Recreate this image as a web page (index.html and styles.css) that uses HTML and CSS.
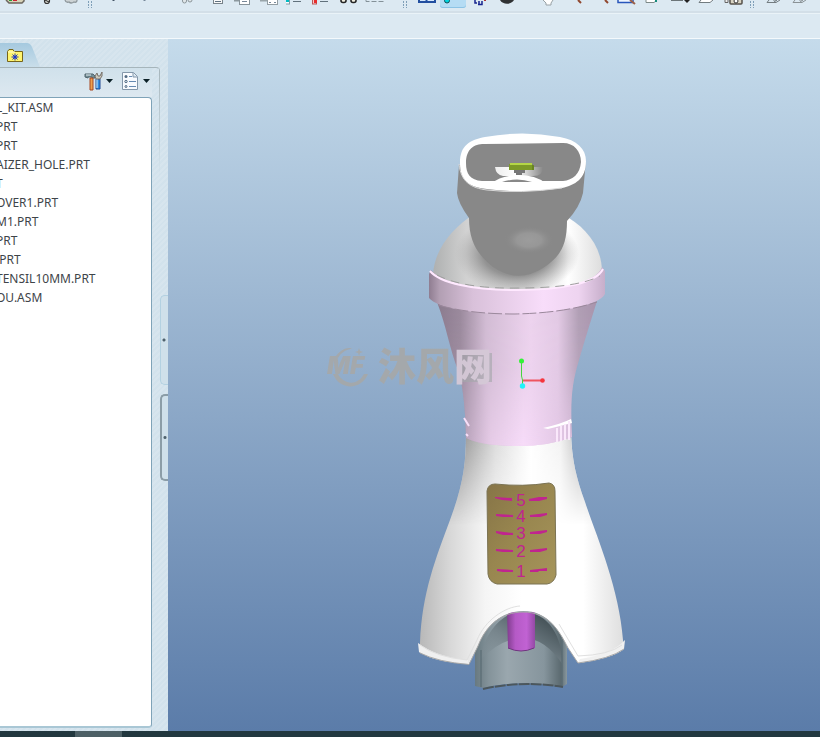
FILE: index.html
```html
<!DOCTYPE html>
<html lang="en">
<head>
<meta charset="utf-8">
<title>Assembly viewer</title>
<link rel="stylesheet" href="styles.css">
</head>
<body>
<div class="app">
  <header class="toolbar">
    <div class="group first">
      <button class="tool"><svg viewBox="0 0 26 12"><path d="M4 0L7 3H20L22 1V0" fill="#d8d3b8" stroke="#6b665e" stroke-width="1.5"/><path d="M7 0h3v1H7z" fill="#2c9a36"/><path d="M11 0h4v1h-4z" fill="#c23"/></svg></button>
      <button class="tool spaced"><svg viewBox="0 0 26 12"><circle cx="13" cy="1" r="2.5" fill="#d8d8d0" stroke="#333" stroke-width="1.2"/><path d="M11 0l4 2" stroke="#222"/></svg></button>
      <button class="tool"><svg viewBox="0 0 26 12"><path d="M5 0q1 3 4 2q2 2 5 0q3 1 3-2" fill="#cdd3d5" stroke="#8d969a" stroke-width="1.3"/></svg></button>
    </div>
    <span class="grip"></span>
    <div class="group">
      <button class="tool lead"><svg viewBox="0 0 26 12"><path d="M10 0h3l-1 1h-1z" fill="#456"/></svg></button>
      <button class="tool spaced"><svg viewBox="0 0 26 12"><path d="M9 0h3l-1 1h-1z" fill="#789"/></svg></button>
      <button class="tool lead-lg"><svg viewBox="0 0 26 12"><g fill="#dfe5e8" stroke="#8c969b"><rect x="6.500" y="-3" width="4" height="6" rx="2"/><rect x="12" y="-3" width="4" height="5" rx="2"/></g></svg></button>
      <button class="tool spaced"><svg viewBox="0 0 26 12"><rect x="5.500" y="-4" width="9" height="7.500" fill="#fafafa" stroke="#78838a"/><path d="M7 1.500h6" stroke="#5e7180"/></svg></button>
      <button class="tool"><svg viewBox="0 0 26 12"><path d="M0 .5h6" stroke="#8d999f" stroke-width="2"/><rect x="5.500" y="-4" width="10" height="8.500" fill="#fff" stroke="#87939a"/><path d="M8 1.500h5" stroke="#789"/></svg></button>
      <button class="tool"><svg viewBox="0 0 26 12"><path d="M0 .5h7" stroke="#99a5aa" stroke-width="2"/><rect x="7.500" y="-4" width="10" height="8.500" fill="#fff" stroke="#929da2"/><path d="M9 2.500h2m3 0h2" stroke="#789"/></svg></button>
      <button class="tool"><svg viewBox="0 0 26 12"><rect x="-.5" y="-2" width="4" height="6" fill="#fff" stroke="#8599a4"/><path d="M0 0h3v2H0z" fill="#00bbc3"/><path d="M7 1.500h8" stroke="#61717c"/></svg></button>
      <button class="tool"><svg viewBox="0 0 26 12"><rect x="0.500" y="-2" width="4" height="6" fill="#f7caca" stroke="#bb5656"/><path d="M2 0h3v3H2z" fill="#e82c2c"/><path d="M8 1.500h8" stroke="#61717c"/></svg></button>
      <button class="tool"><svg viewBox="0 0 26 12"><g fill="#f1eee0" stroke="#252525" stroke-width="1.600"><rect x="3" y="-3" width="5" height="5.500" rx="2"/><rect x="13" y="-3" width="5" height="5.500" rx="2"/></g></svg></button>
      <button class="tool"><svg viewBox="0 0 26 12"><path d="M2 0v1.500h18V0" fill="none" stroke="#849198" stroke-dasharray="5 2"/></svg></button>
    </div>
    <span class="grip wide"></span>
    <div class="group">
      <button class="tool"><svg viewBox="0 0 26 12"><path d="M5 0v2h16V0M12.500 0v2" fill="#d5e8fc" stroke="#234fa0" stroke-width="2"/></svg></button>
      <button class="tool on"><svg viewBox="0 0 26 12"><circle cx="7" cy=".5" r="2.500" fill="#00d5de" stroke="#134f59"/></svg></button>
      <button class="tool"><svg viewBox="0 0 26 12"><path d="M9 0v3h2M12 4.500h4V1M13 1v3" fill="none" stroke="#17258f" stroke-width="1.500"/><path d="M18 0h2v1h-2z" fill="#a33"/></svg></button>
      <button class="tool"><svg viewBox="0 0 26 12"><path d="M8 0c3 5 11 5 14 0z" fill="#303234"/></svg></button>
      <button class="tool lead-md"><svg viewBox="0 0 26 12"><path d="M7 0l3 3v2h5V3l2-3" fill="#fff" stroke="#98a1a5"/></svg></button>
      <button class="tool"><svg viewBox="0 0 26 12"><path d="M16 0l3 3" stroke="#90472f" stroke-width="2"/></svg></button>
      <button class="tool"><svg viewBox="0 0 26 12"><path d="M17 0l3 3" stroke="#90472f" stroke-width="2"/></svg></button>
      <button class="tool"><svg viewBox="0 0 26 12"><path d="M4 0v2.500h15V0" fill="#eef6ff" stroke="#2856bb" stroke-width="1.500"/><path d="M16 0l5 4" stroke="#9b6047" stroke-width="2"/></svg></button>
      <button class="tool"><svg viewBox="0 0 26 12"><path d="M6 0v2.500h8L17 0" fill="#fff" stroke="#7d8988"/><path d="M15 0h2v2h-2z" fill="#158b7b"/></svg></button>
      <button class="tool"><svg viewBox="0 0 26 12"><path d="M5 .5h12" stroke="#6c7579"/><path d="M18 0h6l-3 3z" fill="#222"/></svg></button>
      <button class="tool"><svg viewBox="0 0 26 12"><path d="M9 0L7 2.500h11L21 0" fill="#fff" stroke="#737c80"/></svg></button>
      <button class="tool"><svg viewBox="0 0 26 12"><path d="M7 0v2.500h3V0" fill="#eee" stroke="#666"/><rect x="12" y="-4" width="12" height="8" rx="1" fill="#d9d4c3" stroke="#55504a" stroke-width="1.500"/><circle cx="18" cy="1" r="2" fill="#fff" stroke="#333"/></svg></button>
    </div>
    <span class="grip"></span>
    <div class="group">
      <button class="tool"><svg viewBox="0 0 26 12"><path d="M9 0L7 2.500h9L20 0M13 0h4l-3 2" fill="none" stroke="#737c80"/></svg></button>
      <button class="tool"><svg viewBox="0 0 26 12"><path d="M9 0L7 2.500h9L20 0M13 0h4l-3 2" fill="none" stroke="#8a9296"/></svg></button>
    </div>
  </header>
  <div class="band"></div>

  <main class="work">
    <aside class="side">
      <nav class="tabs">
        <button class="tab" aria-label="Folders">
          <svg class="tab-shape" viewBox="0 0 40 24"><defs><linearGradient id="tabg" x2="0" y2="1"><stop stop-color="#a5c9df"/><stop offset="1" stop-color="#c9deea"/></linearGradient></defs><path d="M0 0H27Q30 0 32 4L40 24H0z" fill="url(#tabg)"/>
          <path d="M7.500 18.500V8.500L9 6.500h4l1 2h8.500v10z" fill="#fff56e" stroke="#77651a"/><path d="M8 9h7" stroke="#fffbd0"/><path d="M15 10.500v7M11.500 14h7M12.500 11.500l5 5m0-5l-5 5" stroke="#263bb5"/><circle cx="15" cy="14" r="1.500" fill="#1835d2"/></svg>
        </button>
      </nav>
      <div class="panel">
        <div class="actions">
          <button class="action" aria-label="Settings"><svg viewBox="0 0 30 22"><path d="M1 6V3h8l2 2v2H8V6H4v1z" fill="#728d96" stroke="#51656d"/><path d="M2 4h5" stroke="#e3eff2"/><path d="M6 7h3v12H6z" fill="#eda14f" stroke="#a74720"/><path d="M12 8h4v10h-4z" fill="#318ee3" stroke="#234a94"/><path d="M13 8v9" stroke="#d8efff"/><path d="M12 8l-1-3 2-3 1 3h2l2-4v4l-2 3z" fill="#ccc9bd" stroke="#77716a"/><path d="M22 8h7l-3.500 4z" fill="#0b2027"/></svg></button>
          <button class="action" aria-label="Show"><svg viewBox="0 0 30 22"><path d="M.5 1.500h11l4 4v13H.5z" fill="#f8fbff" stroke="#8397aa"/><path d="M11 2v4h4" fill="#d7e5ef" stroke="#8397aa"/><path d="M7 5.500h3M7 10.500h7M7 15.500h7" stroke="#668bb3"/><circle cx="4" cy="5.500" r="1.500" fill="#536b83"/><circle cx="4" cy="10.500" r="1.200" fill="#dce8f0" stroke="#536b83"/><circle cx="4" cy="15.500" r="1" fill="#dce8f0" stroke="#536b83"/><path d="M21 8h7l-3.500 4z" fill="#0b2027"/></svg></button>
        </div>
        <ul class="tree">
          <li>L_KIT.ASM</li>
          <li>PRT</li>
          <li>PRT</li>
          <li>AIZER_HOLE.PRT</li>
          <li>T</li>
          <li>OVER1.PRT</li>
          <li>M1.PRT</li>
          <li>PRT</li>
          <li>.PRT</li>
          <li>TENSIL10MM.PRT</li>
          <li>OU.ASM</li>
        </ul>
      </div>
      <div class="handles">
        <button class="handle faint" aria-label="Collapse tree"></button>
        <button class="handle" aria-label="Collapse panel"></button>
      </div>
    </aside>

    <section class="view">
      <svg class="scene" viewBox="168 39 652 692">
        <defs>
          <linearGradient id="dome"><stop stop-color="#aeb0b0"/><stop offset=".2" stop-color="#d2d2d2"/><stop offset=".55" stop-color="#d5d5d5"/><stop offset=".8" stop-color="#fff"/><stop offset="1" stop-color="#ddd"/></linearGradient>
          <radialGradient id="shade"><stop stop-color="#707070"/><stop offset=".55" stop-color="#888" stop-opacity=".85"/><stop offset="1" stop-color="#aaa" stop-opacity="0"/></radialGradient>
          <radialGradient id="shine"><stop stop-color="#9c9c9c"/><stop offset=".5" stop-color="#979797"/><stop offset="1" stop-color="#888" stop-opacity="0"/></radialGradient>
          <linearGradient id="ring"><stop stop-color="#8f7d91"/><stop offset=".06" stop-color="#b29fb3"/><stop offset=".25" stop-color="#d9c1da"/><stop offset=".65" stop-color="#f8ddfa"/><stop offset=".85" stop-color="#eed4f0"/><stop offset="1" stop-color="#c6aeca"/></linearGradient>
          <linearGradient id="neck" gradientUnits="userSpaceOnUse" x1="438" x2="598"><stop stop-color="#8b7b8e"/><stop offset=".14" stop-color="#9b8a9d"/><stop offset=".3" stop-color="#d2bcd4"/><stop offset=".58" stop-color="#edd3ee"/><stop offset=".75" stop-color="#e3cae5"/><stop offset=".88" stop-color="#b19fb5"/><stop offset="1" stop-color="#a893ac"/></linearGradient>
          <linearGradient id="lowneck" gradientUnits="userSpaceOnUse" x1="464" x2="572"><stop stop-color="#b9a3bb"/><stop offset=".25" stop-color="#e7cce8"/><stop offset=".55" stop-color="#f7dcf9"/><stop offset="1" stop-color="#dbc0de"/></linearGradient>
          <linearGradient id="fade" x2="0" y2="1"><stop stop-color="#000"/><stop offset=".45" stop-color="#222"/><stop offset="1" stop-color="#fff"/></linearGradient>
          <mask id="lowmask"><rect x="430" y="305" width="180" height="145" fill="url(#fade)"/></mask>
          <linearGradient id="body" gradientUnits="userSpaceOnUse" x1="420" x2="624"><stop stop-color="#b8b8b8"/><stop offset=".15" stop-color="#d8d8d8"/><stop offset=".32" stop-color="#f5f5f5"/><stop offset=".5" stop-color="#fff"/><stop offset=".8" stop-color="#fff"/><stop offset="1" stop-color="#dedede"/></linearGradient>
          <linearGradient id="stem" gradientUnits="userSpaceOnUse" x1="460" x2="578"><stop stop-color="#929292"/><stop offset=".3" stop-color="#dadada"/><stop offset=".6" stop-color="#fff"/><stop offset=".85" stop-color="#f2f2f2"/><stop offset="1" stop-color="#c2c2c2"/></linearGradient>
          <linearGradient id="stemfade" gradientUnits="userSpaceOnUse" x1="0" x2="0" y1="436" y2="525"><stop stop-color="#fff"/><stop offset="1" stop-color="#000"/></linearGradient>
          <mask id="stemmask"><rect x="410" y="430" width="220" height="130" fill="url(#stemfade)"/></mask>
          <linearGradient id="steel"><stop stop-color="#687980"/><stop offset=".15" stop-color="#84939a"/><stop offset=".35" stop-color="#9aa7ae"/><stop offset=".75" stop-color="#86959d"/><stop offset=".93" stop-color="#5c6b71"/><stop offset="1" stop-color="#89989f"/></linearGradient>
          <linearGradient id="hollow" x1="0" y1="1" x2="1" y2="0"><stop stop-color="#849299" stop-opacity="0"/><stop offset=".45" stop-color="#748289"/><stop offset="1" stop-color="#303d42"/></linearGradient>
          <linearGradient id="rod"><stop stop-color="#803c8e"/><stop offset=".3" stop-color="#b55ac6"/><stop offset=".7" stop-color="#c162d3"/><stop offset="1" stop-color="#9449a5"/></linearGradient>
          <linearGradient id="gold" x2="1" y2="1"><stop stop-color="#867447"/><stop offset=".45" stop-color="#98864f"/><stop offset="1" stop-color="#a6955b"/></linearGradient>
          <linearGradient id="cup"><stop stop-color="#eee"/><stop offset=".45" stop-color="#fff"/><stop offset="1" stop-color="#888"/></linearGradient>
        </defs>

        <!-- foot and plunger -->
        <path d="M475 640V686L483 688Q522 679 562 687L567 684V635L545 608H500z" fill="url(#steel)"/>
        <path d="M480 660C484 635 500 612 522 612C550 612 562 638 563 665Q545 638 523 638Q502 638 480 660z" fill="url(#hollow)"/>
        <path d="M481 650V687M562 640V686" stroke="#55666e" fill="none"/>
        <path d="M483 689Q522 680 563 687" stroke="#4c575c" stroke-width="2" fill="none" stroke-dasharray="11 1"/>
        <path d="M507 612H535V648Q521 654 508 648z" fill="url(#rod)"/>
        <path d="M508 648Q521 654 534 648" stroke="#713480" fill="none"/>

        <!-- flared body -->
        <path d="M466 434C466 464 463 485 450 520C436 558 422 592 420 643L419 652Q438 662 469 664L478 646C486 625 502 611 523 611C548 611 559 630 568 648L578 663Q610 659 624 649L623 640C619 587 596 535 585 502C576 477 572 460 571 434z" fill="url(#body)"/>
        <path d="M466 434C466 464 463 485 450 520L440 550H600L585 502C576 477 572 460 571 434z" fill="url(#stem)" mask="url(#stemmask)"/>
        <path d="M418 643Q436 657 468 660L469 664Q434 662 419 652zM625 640Q611 655 580 659L578 663Q614 658 624 649z" fill="#f0f0f0"/>
        <path d="M420 645Q436 657 467 660L477 640C485 620 505 607 520 606M559 624L578 656Q609 655 622 645" stroke="#e0e0e0" fill="none"/>
        <path d="M420 653Q438 662 469 664.500L478 646C486 625 502 612 523 612C548 612 559 630 568 648L578 663Q610 659 624 649" stroke="#a8a8a8" fill="none"/>

        <!-- neck and collar -->
        <path d="M437 302C446 325 450 350 458 370Q465 391 466 438Q482 446 518 446Q550 446 572 437C570 400 572 383 579 360Q585 339 597 301Q518 325 437 302z" fill="url(#neck)"/>
        <path d="M437 302C446 325 450 350 458 370Q465 391 466 438Q482 446 518 446Q550 446 572 437C570 400 572 383 579 360Q585 339 597 301z" fill="url(#lowneck)" mask="url(#lowmask)"/>
        <path d="M543 428Q561 424 571 419L572 423Q560 426 548 429z" fill="#fff"/>
        <path d="M557 428v14M561 426v15M565 424v16M569 421v19" stroke="#fae8fb" stroke-width="2"/>
        <path d="M464 418l5 8M466 434l2 2" stroke="#f7dff8" stroke-width="2"/>
        <path d="M433 274C435 247 454 227 474 214H562C585 226 602 246 602 272Q592 289 518 290Q447 290 433 274z" fill="url(#dome)"/>
        <ellipse cx="517" cy="254" rx="62" ry="40" fill="url(#shade)"/>
        <path d="M431 270L429 274V298C438 308 470 314 515 314C557 313 599 306 605 294V271L602 267C596 284 558 290 518 290C472 290 440 282 431 270z" fill="url(#ring)"/>
        <path d="M430 271C440 283 472 290 518 290C558 290 596 284 603 269" stroke="#ffe9ff" stroke-width="2" fill="none"/>
        <path d="M437 275Q464 289 518 288Q577 288 600 276" fill="none" stroke="#9f9f9f" stroke-dasharray="9 6"/>
        <path d="M438 305Q469 314 515 314Q564 313 597 302" fill="none" stroke="#9a889b" stroke-dasharray="14 3"/>

        <!-- mouthpiece -->
        <path d="M459 165L457 193Q458 203 469 218C469 242 478 255 493 267Q518 284 543 268C560 257 567 246 567 221Q580 207 583 193L586 160z" fill="#888"/>
        <ellipse cx="529" cy="240" rx="25" ry="14" fill="url(#shine)"/>
        <path d="M460 163C460 145 470 140 485 137Q522 130 560 137C577 140 586 149 586 161C586 179 575 185 562 188Q521 194 487 189C468 187 460 180 460 163z" fill="#fff"/>
        <path d="M466 163C466 149 474 144 484 144L563 143C574 143 581 151 581 162C580 174 573 180 563 181H482C470 180 466 174 466 163z" fill="#888"/>
        <path d="M459 164C461 182 471 188 487 190Q520 194 562 188" fill="none" stroke="#d9d9d9"/>
        <path d="M495 167H543Q543 177 531 176H503Q496 175 495 167z" fill="url(#cup)"/>
        <path d="M493 183Q499 176 518 175Q536 175 545 183z" fill="#fff"/>
        <path d="M502 182Q517 177 532 182z" fill="#888"/>
        <path d="M514 170h11v3h-3v2h-6v-2h-2z" fill="#777"/>
        <path d="M509 164H532L534 166V170H509z" fill="#7c9a27"/><path d="M510 164h22" stroke="#b4d646" stroke-width="2"/><path d="M533 165v5" stroke="#55701c"/>

        <!-- dosage window -->
        <path d="M487 491Q488 484 495 484Q523 487 549 483Q555 484 555 491L556 575Q554 583 547 584H497Q489 582 488 574z" fill="url(#gold)" stroke="#7b7353"/>
        <g fill="#c0248f"><path d="M495 497l17 1v3l-10-1-7-2zM529 499l10-2h8v2l-8 2h-10zM496 514l17 1v2h-10l-7-1zM530 515l17-2v2l-7 2h-10zM496 531l17 2v2h-10l-7-2zM530 532l17-2v2l-7 2h-10zM496 549l17 1v2h-10l-7-1zM530 550l17-2v2l-7 2h-10zM497 569l16 1v2h-10l-6-1zM530 570l9-1 8-1v3h-8l-1 1h-8z"/></g>
        <g class="digits"><text x="521" y="506">5</text><text x="521" y="522">4</text><text x="521" y="539">3</text><text x="521" y="557">2</text><text x="521" y="577">1</text></g>

        <!-- site watermark -->
        <g class="mark">
          <path d="M336 356C341 350 346 347 352 348.500C345 350 341 353 338 358zM333 374C339 390 361 391 368 374H364C357 387 343 384 338 374zM359 348l1 3 3 1-3 1-1 3-1-3-3-1 3-1z"/>
          <text class="mf" x="327" y="374">MF</text>
          <path class="seal" d="M457 353H492V382H457z"/>
          <text class="cn" x="378" y="380">沐风<tspan class="light">网</tspan></text>
        </g>

        <!-- coordinate triad -->
        <path d="M521.500 361V376L522.500 380V386" fill="none" stroke="#46d53f"/>
        <path d="M523 380.500H542" stroke="#ee5560" stroke-width="2"/>
        <circle cx="521.500" cy="361" r="2.500" fill="#34f238"/><circle cx="542.500" cy="380.500" r="2.300" fill="#f5353d"/><circle cx="522.500" cy="386" r="2.700" fill="#20f2fa"/>
      </svg>
    </section>
  </main>
  <footer class="taskbar"><span class="task"></span></footer>
</div>
</body>
</html>
```
FILE: styles.css
```css
* { box-sizing: border-box; }
body { margin: 0; font-family: "Noto Sans", "Open Sans", sans-serif; font-size: 12px; }
button { border: 0; padding: 0; background: none; font: inherit; }
svg { display: block; }

.app { display: flex; flex-direction: column; height: 100vh; overflow: hidden; }

.toolbar { display: flex; height: 13px; flex: none; background: #dce9f2; border-bottom: 2px solid #d3dfe8; overflow: hidden; }
.group { display: flex; }
.first { padding-left: 2px; }
.tool { width: 26px; height: 10px; flex: none; overflow: hidden; }
.tool svg { width: 26px; height: 12px; }
.tool.on { height: 8px; background: #b5dcf4; border-radius: 0 0 3px 3px; box-shadow: inset 0 -1px #8cc3e5; }
.spaced { margin-left: 6px; }
.lead { margin-left: 8px; }
.lead-md { margin-left: 18px; }
.lead-lg { margin-left: 16px; }
.grip {
  width: 4px;
  height: 8px;
  flex: none;
  margin: 0 6px;
  background:
    repeating-linear-gradient(#dce9f2 0 1px, transparent 1px 3px),
    repeating-linear-gradient(90deg, #7f9fb8 0 1px, #dce9f2 1px 3px);
}
.first + .grip { margin: 0 2px; }
.wide { margin: 0 7px 0 13px; }

.band { height: 26px; flex: none; background: #dce9f2; border-top: 1px solid #eaf3f8; border-bottom: 1px solid #f4f9fc; }

.work { display: flex; flex: 1; min-height: 0; }
.side {
  display: grid;
  grid-template-columns: 160px 8px;
  grid-template-rows: 28px 1fr;
  flex: none;
  padding-bottom: 3px;
  background: repeating-linear-gradient(135deg, #d2e2ec 0 2px, #d7e5ee 2px 4px);
}
.tabs { grid-column: 1 / -1; padding-top: 4px; }
.tab, .tab-shape { display: block; width: 40px; height: 24px; }
.panel {
  display: flex;
  flex-direction: column;
  min-height: 0;
  padding-right: 7px;
  border-top: 1px solid #a6b5bb;
  border-right: 1px solid transparent;
  border-top-right-radius: 4px;
  background: linear-gradient(#a6b5bb, #cddde6 90px, transparent 110px) right top / 1px 100% no-repeat border-box;
}
.actions { display: flex; justify-content: flex-end; gap: 8px; height: 29px; padding: 3px 0 0; background: linear-gradient(#d0e1eb, #dde8f0); flex: none; }
.action, .action svg { width: 30px; height: 22px; }
.tree {
  flex: 1;
  margin: 0;
  padding: 0;
  list-style: none;
  overflow: hidden;
  background: #fff;
  border: solid #7fa3b8;
  border-width: 1px 1px 2px 0;
  border-bottom-color: #a9c7d5;
  border-radius: 0 4px 4px 0;
  color: #3e4449;
}
.tree li { height: 19px; line-height: 19px; text-indent: -4px; white-space: nowrap; }

.handles { display: flex; flex-direction: column; gap: 9px; padding-top: 228px; }
.handle {
  width: 8px;
  height: 87px;
  border: 2px solid #8b9da7;
  border-right: 0;
  border-radius: 5px 0 0 5px;
  background: radial-gradient(circle at 3px 50%, #4f626d 0 1px, transparent 2px) #cfe0ea;
}
.faint { height: 90px; border: 1px solid #b3d1e1; border-right: 0; }

.view { flex: 1; min-width: 0; background: linear-gradient(#c5dbeb, #5b7ca9); }
.scene { width: 100%; height: 100%; }
.digits { font: 17px "Liberation Sans", sans-serif; text-anchor: middle; fill: #c0248f; }
.mark { fill: #a5a8aa; opacity: 0.95; }
.mf { font: italic 900 24px Inter, "Liberation Sans", sans-serif; }
.seal { opacity: 0.65; }
.cn { font: 900 38px "Noto Sans CJK SC", sans-serif; }
.light { fill: #d5c9d7; }

.taskbar { display: flex; height: 6px; flex: none; padding-left: 75px; background: #22383f; }
.task { width: 47px; background: #4d6066; }
```
